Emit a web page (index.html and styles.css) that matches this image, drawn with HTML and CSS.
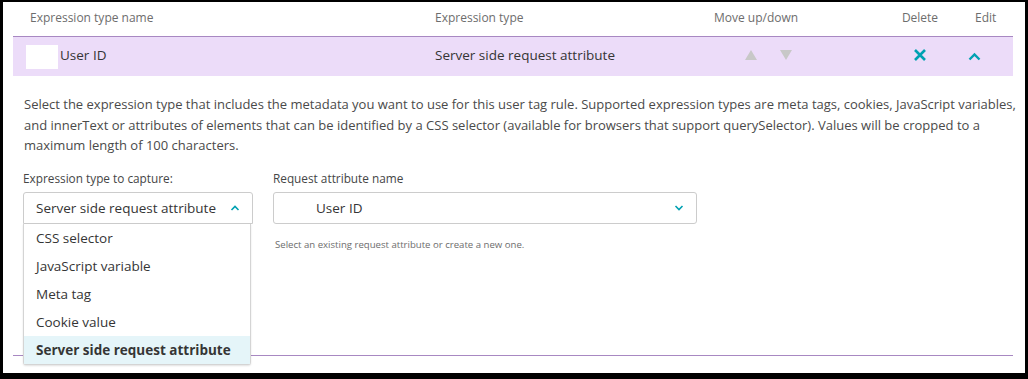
FILE: index.html
```html
<!DOCTYPE html>
<html lang="en">
<head>
    <meta charset="UTF-8">
    <title>User tag rule</title>
    <link rel="stylesheet" href="styles.css">
</head>
<body>
  <div class="frame">
    <div class="rules-table">
      <div class="table-head">
        <div class="col-name">Expression type name</div>
        <div class="col-type">Expression type</div>
        <div class="col-move">Move up/down</div>
        <div class="col-delete">Delete</div>
        <div class="col-edit">Edit</div>
      </div>

      <div class="table-row expanded">
        <div class="col-name"><span class="name-icon"></span>User ID</div>
        <div class="col-type">Server side request attribute</div>
        <div class="col-move">
          <svg class="arrow" viewBox="0 0 14 12"><path d="M7 1 L13 11 L1 11 Z" /></svg>
          <svg class="arrow" viewBox="0 0 14 12"><path d="M1 1 L13 1 L7 11 Z" /></svg>
        </div>
        <div class="col-delete">
          <svg class="icon-x" viewBox="0 0 14 14"><path d="M2 2 L12 12 M12 2 L2 12" /></svg>
        </div>
        <div class="col-edit">
          <svg class="icon-chevron" viewBox="0 0 14 9"><path d="M2 7.5 L7 2.5 L12 7.5" /></svg>
        </div>
      </div>

      <div class="row-details">
        <p class="details-text">Select the expression type that includes the metadata you want to use for this user tag rule. Supported expression types are meta tags, cookies, JavaScript variables, and innerText or attributes of elements that can be identified by a CSS selector (available for browsers that support querySelector). Values will be cropped to a maximum length of 100 characters.</p>

        <div class="fields">
          <div class="field field-type">
            <label>Expression type to capture:</label>
            <div class="select open">
              <span>Server side request attribute</span>
              <svg class="select-arrow" viewBox="0 0 10 6"><path d="M1.5 5 L5 1.5 L8.5 5" /></svg>
            </div>
            <ul class="dropdown">
              <li>CSS selector</li>
              <li>JavaScript variable</li>
              <li>Meta tag</li>
              <li>Cookie value</li>
              <li class="selected">Server side request attribute</li>
            </ul>
          </div>

          <div class="field field-attr">
            <label>Request attribute name</label>
            <div class="select">
              <span class="attr-value">User ID</span>
              <svg class="select-arrow" viewBox="0 0 10 6"><path d="M1.5 1 L5 4.5 L8.5 1" /></svg>
            </div>
            <div class="hint">Select an existing request attribute or create a new one.</div>
          </div>
        </div>
      </div>
      <div class="row-end"></div>
    </div>
  </div>
</body>
</html>
```

FILE: styles.css
```css
* {
    box-sizing: border-box;
    margin: 0;
    padding: 0;
    font-family: 'Open Sans', 'Noto Sans', sans-serif;
}

body {
    background-color: #000;
    width: 1028px;
    height: 379px;
    padding: 2px 3px 6px 3px;
}

.frame {
    background: #fff;
    height: 371px;
    padding: 0 12px 0 10px;
}

.rules-table {
    width: 1000px;
    position: relative;
}

.table-head,
.table-row {
    display: grid;
    grid-template-columns: 422px 279px 166px 80px 53px;
    align-items: center;
}

.table-head {
    height: 35px;
    padding-bottom: 4px;
    font-size: 12px;
    color: #6d6d6d;
    border-bottom: 1px solid #a888c2;
}

.col-name {
    padding-left: 17px;
}

.col-delete {
    text-align: center;
}

.table-head .col-edit {
    padding-left: 15px;
}

.table-row {
    height: 39px;
    padding-bottom: 4px;
    background: #ecdcf9;
    font-size: 13.5px;
    color: #353535;
}

.table-row .col-name {
    display: flex;
    align-items: center;
    padding-left: 13px;
}

.name-icon {
    width: 32px;
    height: 24px;
    background: #fff;
    margin-right: 2px;
    margin-top: 4px;
}

.table-row .col-move {
    display: flex;
    gap: 21px;
    padding-left: 30px;
}

.arrow {
    width: 14px;
    height: 12px;
    fill: #c8c8c8;
}

.icon-x {
    width: 14px;
    height: 14px;
    stroke: #00a1b2;
    stroke-width: 2.6;
    fill: none;
    margin-top: 4px;
}

.table-row .col-edit {
    padding-left: 7px;
}

.icon-chevron {
    width: 15px;
    height: 9px;
    stroke: #00a1b2;
    stroke-width: 2.4;
    fill: none;
    margin-top: 8px;
}

.row-details {
    padding: 18px 0 0 10px;
}

.details-text {
    font-size: 13px;
    line-height: 20.5px;
    color: #4a4a4a;
    width: 1000px;
    padding-left: 1px;
}

.fields {
    display: flex;
    gap: 20px;
    margin-top: 14px;
}

.field label {
    display: block;
    font-size: 11.8px;
    color: #454646;
    margin-bottom: 6px;
}

.field-type {
    width: 230px;
    position: relative;
    z-index: 2;
}

.field-attr {
    width: 424px;
}

.select {
    height: 32px;
    border: 1px solid #cccccc;
    border-radius: 3px;
    display: flex;
    align-items: center;
    justify-content: space-between;
    padding: 0 12px 0 12px;
    font-size: 13.5px;
    color: #353535;
}

.select.open {
    border-bottom-left-radius: 0;
    border-bottom-right-radius: 0;
}

.attr-value {
    padding-left: 30px;
}

.select-arrow {
    width: 10px;
    height: 6px;
    stroke: #00a1b2;
    stroke-width: 1.6;
    fill: none;
}

.dropdown {
    list-style: none;
    width: 228px;
    border: 1px solid #d4d4d4;
    border-top: none;
    border-radius: 0 0 3px 3px;
    background: #fff;
    box-shadow: 0 1px 2px rgba(0, 0, 0, 0.12);
}

.dropdown li {
    height: 28px;
    line-height: 28px;
    padding-left: 12px;
    font-size: 13.5px;
    color: #353535;
}

.dropdown li.selected {
    background: #e5f5f9;
    font-weight: 700;
}

.hint {
    font-size: 9.6px;
    color: #6d6d6d;
    margin-top: 14px;
    padding-left: 2px;
}

.row-end {
    position: absolute;
    left: 0;
    right: 0;
    top: 353px;
    border-top: 1px solid #a888c2;
    z-index: 1;
}
```
